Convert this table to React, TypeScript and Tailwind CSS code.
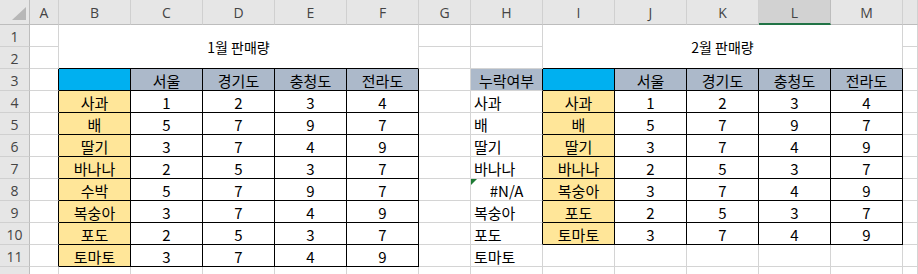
import React from 'react';

const COLS = ['A', 'B', 'C', 'D', 'E', 'F', 'G', 'H', 'I', 'J', 'K', 'L', 'M', ''];
const ROWS = [1, 2, 3, 4, 5, 6, 7, 8, 9, 10, 11, 12];

const fruits1 = ['사과', '배', '딸기', '바나나', '수박', '복숭아', '포도', '토마토'];
const sales1 = [
    [1, 2, 3, 4],
    [5, 7, 9, 7],
    [3, 7, 4, 9],
    [2, 5, 3, 7],
    [5, 7, 9, 7],
    [3, 7, 4, 9],
    [2, 5, 3, 7],
    [3, 7, 4, 9],
];
const fruits2 = ['사과', '배', '딸기', '바나나', '복숭아', '포도', '토마토'];
const sales2 = [
    [1, 2, 3, 4],
    [5, 7, 9, 7],
    [3, 7, 4, 9],
    [2, 5, 3, 7],
    [3, 7, 4, 9],
    [2, 5, 3, 7],
    [3, 7, 4, 9],
];
const lookup = ['사과', '배', '딸기', '바나나', '#N/A', '복숭아', '포도', '토마토'];
const regions = ['서울', '경기도', '충청도', '전라도'];

// r: sheet row (1-based), c: column index (0 = A)
const inTable = (r: number, c: number) =>
    (r >= 3 && r <= 11 && c >= 1 && c <= 5) || (r >= 3 && r <= 10 && c >= 8 && c <= 12);

const inMerge = (r: number, c: number) =>
    r <= 2 && ((c >= 1 && c <= 5) || (c >= 8 && c <= 12));

function cellText(r: number, c: number): string {
    if (r === 3) {
        if (c >= 2 && c <= 5) return regions[c - 2];
        if (c >= 9 && c <= 12) return regions[c - 9];
        if (c === 7) return '누락여부';
        return '';
    }
    if (r >= 4 && r <= 11) {
        const i = r - 4;
        if (c === 1) return fruits1[i];
        if (c >= 2 && c <= 5) return String(sales1[i][c - 2]);
        if (c === 7) return lookup[i];
        if (r <= 10) {
            if (c === 8) return fruits2[i];
            if (c >= 9 && c <= 12) return String(sales2[i][c - 9]);
        }
    }
    return '';
}

function fillClass(r: number, c: number) {
    if (r === 3 && (c === 1 || c === 8)) return 'bg-[#00b0f0]';
    if (r === 3 && ((c >= 2 && c <= 5) || (c >= 9 && c <= 12) || c === 7)) return 'bg-[#acb9ca]';
    if ((c === 1 && r >= 4 && r <= 11) || (c === 8 && r >= 4 && r <= 10)) return 'bg-[#ffe699]';
    return 'bg-white';
}

function Cell({ r, c }: { r: number; c: number }) {
    const text = cellText(r, c);
    const rightBlack = inTable(r, c) || inTable(r, c + 1);
    const bottomBlack = inTable(r, c) || inTable(r + 1, c);
    const leftAlign = c === 7 && r >= 4 && text !== '#N/A';

    return (
        <div
            className={`relative flex h-[22px] items-center overflow-hidden whitespace-nowrap border-r border-b text-[15px] leading-none text-black ${fillClass(r, c)} ${
                rightBlack ? 'border-r-black' : 'border-r-[#d4d4d4]'
            } ${bottomBlack ? 'border-b-black' : 'border-b-[#d4d4d4]'} ${
                leftAlign ? 'justify-start pl-[3px]' : 'justify-center'
            }`}
        >
            {r === 8 && c === 7 && (
                <span className="absolute left-0 top-0 h-0 w-0 border-t-[6px] border-r-[6px] border-t-[#1e7b34] border-r-transparent" />
            )}
            <span className="pt-[2px]">{text}</span>
        </div>
    );
}

export default function App() {
    const cells: React.ReactNode[] = [];

    // column header row
    cells.push(
        <div key="corner" className="relative h-[25px] border-r border-b border-r-[#bdbdbd] border-b-[#bdbdbd] bg-[#e6e6e6]">
            <svg className="absolute left-[12px] top-[7px]" width="14" height="13" viewBox="0 0 14 13">
                <polygon points="14,0 14,13 0,13" fill="#b7b7b7" />
            </svg>
        </div>
    );
    COLS.forEach((col, c) => {
        const selected = col === 'L';
        cells.push(
            <div
                key={`h-${c}`}
                className={`flex h-[25px] items-center justify-center pt-[1px] text-[14px] text-[#444] ${
                    selected
                        ? 'border-r border-b-2 border-r-[#bdbdbd] border-b-[#217346] bg-[#d2d2d2]'
                        : 'border-r border-b border-r-[#d0d0d0] border-b-[#bdbdbd] bg-[#e6e6e6]'
                }`}
                style={{ fontFamily: '"Open Sans", "Noto Sans", sans-serif' }}
            >
                {col}
            </div>
        );
    });

    ROWS.forEach((r) => {
        // row 12 is only a sliver at the bottom edge, its number falls below the window
        cells.push(
            <div
                key={`rn-${r}`}
                className="flex h-[22px] items-center justify-center border-r border-b border-r-[#bdbdbd] border-b-[#d0d0d0] bg-[#e6e6e6] pt-[1px] text-[14px] text-[#444]"
                style={{ fontFamily: '"Open Sans", "Noto Sans", sans-serif' }}
            >
                {r < 12 ? r : ''}
            </div>
        );
        COLS.forEach((_, c) => {
            if (inMerge(r, c)) {
                if (r === 1 && (c === 1 || c === 8)) {
                    cells.push(
                        <div
                            key={`m-${c}`}
                            className="col-span-5 row-span-2 flex items-center justify-center border-r border-b border-r-[#d4d4d4] border-b-black bg-white pt-[2px] text-[14px] text-black"
                        >
                            {c === 1 ? '1월 판매량' : '2월 판매량'}
                        </div>
                    );
                }
                return;
            }
            cells.push(<Cell key={`${r}-${c}`} r={r} c={c} />);
        });
    });

    return (
        <div
            className="h-[274px] w-[918px] overflow-hidden bg-white"
            style={{ fontFamily: '"Noto Sans CJK KR", "Noto Sans", sans-serif' }}
        >
            <div className="grid grid-cols-[30px_29px_repeat(5,72px)_52px_repeat(6,72px)_1fr] auto-rows-[22px] [grid-template-rows:25px]">
                {cells}
            </div>
        </div>
    );
}
